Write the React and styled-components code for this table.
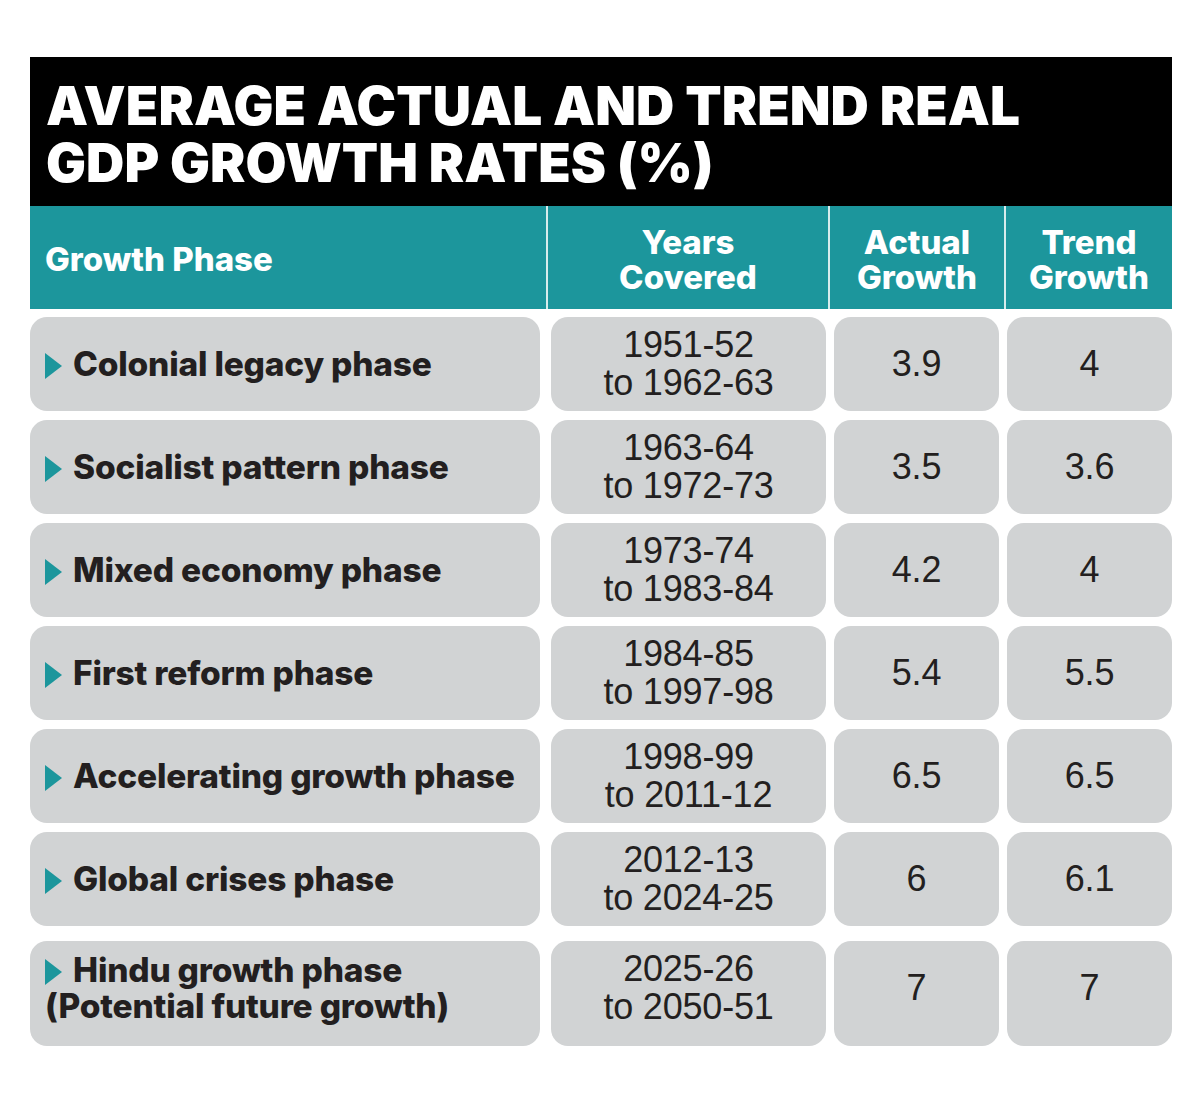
import React from "react";
import styled, { createGlobalStyle } from "styled-components";

const GlobalStyle = createGlobalStyle`
  body {
    margin: 0;
    background: #ffffff;
    font-family: Inter, "Liberation Sans", sans-serif;
  }
`;

const Page = styled.div`
  padding: 57px 28px 40px 30px;
`;

const Board = styled.div`
  width: 1142px;
`;

const Title = styled.h1`
  margin: 0;
  background: #000000;
  color: #ffffff;
  font-family: Inter, sans-serif;
  font-weight: 900;
  font-size: 53px;
  line-height: 57px;
  letter-spacing: 0.1px;
  padding: 21px 16px 14px 16px;
  text-transform: uppercase;
`;

const HeadRow = styled.div`
  display: grid;
  grid-template-columns: 516px 282px 176px 168px;
  height: 103px;
  background: #1c969c;
`;

const HeadCell = styled.div`
  display: flex;
  align-items: center;
  justify-content: ${(p) => (p.left ? "flex-start" : "center")};
  text-align: ${(p) => (p.left ? "left" : "center")};
  padding-left: ${(p) => (p.left ? "15px" : "0")};
  padding-top: 4px;
  border-left: ${(p) => (p.left ? "none" : "2px solid #d7ecec")};
  color: #ffffff;
  font-weight: 800;
  font-size: 33px;
  line-height: 35px;
  letter-spacing: 0;
`;

const Rows = styled.div`
  display: flex;
  flex-direction: column;
  gap: 9px;
  margin-top: 8px;
`;

const Row = styled.div`
  display: grid;
  grid-template-columns: 510px 278px 165px 165px;
  column-gap: 8px;
  height: ${(p) => (p.tall ? "105px" : "94px")};
  margin-top: ${(p) => (p.tall ? "6px" : "0")};
  & > * {
    padding-bottom: ${(p) => (p.tall ? "11px" : "0")};
  }
`;

const Cell = styled.div`
  display: flex;
  align-items: center;
  justify-content: center;
  text-align: center;
  background: #d1d3d4;
  border-radius: 17px;
  color: #231f20;
  font-family: "Liberation Sans", Arial, sans-serif;
  font-size: 36px;
  line-height: 38px;
  letter-spacing: -0.2px;
`;

const YearCell = styled(Cell)`
  margin-left: 3px;
`;

const PhaseCell = styled(Cell)`
  justify-content: flex-start;
  text-align: left;
  padding-left: 15px;
  font-family: Inter, sans-serif;
  font-weight: 800;
  font-size: 33.5px;
  line-height: 36px;
  letter-spacing: -0.2px;
`;

const Arrow = styled.span`
  display: inline-block;
  width: 0;
  height: 0;
  border-top: 13px solid transparent;
  border-bottom: 13px solid transparent;
  border-left: 17px solid #1c969c;
  margin-right: 11px;
  vertical-align: -3px;
`;

const rows = [
  ["Colonial legacy phase", "1951-52", "to 1962-63", "3.9", "4"],
  ["Socialist pattern phase", "1963-64", "to 1972-73", "3.5", "3.6"],
  ["Mixed economy phase", "1973-74", "to 1983-84", "4.2", "4"],
  ["First reform phase", "1984-85", "to 1997-98", "5.4", "5.5"],
  ["Accelerating growth phase", "1998-99", "to 2011-12", "6.5", "6.5"],
  ["Global crises phase", "2012-13", "to 2024-25", "6", "6.1"],
  ["Hindu growth phase", "2025-26", "to 2050-51", "7", "7", "(Potential future growth)"],
];

export default function App() {
  return (
    <>
      <GlobalStyle />
      <Page>
        <Board>
          <Title>
            Average actual and trend real
            <br />
            GDP growth rates (%)
          </Title>
          <HeadRow>
            <HeadCell left>Growth Phase</HeadCell>
            <HeadCell>
              Years
              <br />
              Covered
            </HeadCell>
            <HeadCell>
              Actual
              <br />
              Growth
            </HeadCell>
            <HeadCell>
              Trend
              <br />
              Growth
            </HeadCell>
          </HeadRow>
          <Rows>
            {rows.map(([phase, from, to, actual, trend, note]) => (
              <Row key={phase} tall={!!note}>
                <PhaseCell>
                  <div>
                    <Arrow />
                    {phase}
                    {note && (
                      <>
                        <br />
                        {note}
                      </>
                    )}
                  </div>
                </PhaseCell>
                <YearCell>
                  <div>
                    {from}
                    <br />
                    {to}
                  </div>
                </YearCell>
                <Cell>{actual}</Cell>
                <Cell>{trend}</Cell>
              </Row>
            ))}
          </Rows>
        </Board>
      </Page>
    </>
  );
}
